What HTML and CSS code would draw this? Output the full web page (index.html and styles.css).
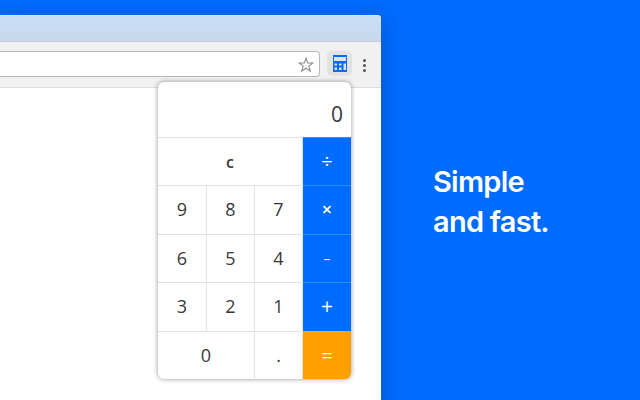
FILE: index.html
```html
<!DOCTYPE html>
<html lang="en">
<head>
<meta charset="utf-8">
<title>Calculator</title>
<link rel="stylesheet" href="styles.css">
</head>
<body>
<main class="promo">
  <section class="browser">
    <div class="titlebar"></div>
    <div class="toolbar">
      <div class="address">
        <svg class="star" width="16" height="16" viewBox="0 0 16 16"><path d="M8 1.2L9.7 6H14.8L10.8 9.1L12.3 14.2L8 11.2L3.7 14.2L5.2 9.1L1.2 6H6.3Z" fill="#fff" stroke="#8b8b8b" stroke-width="1.1"/></svg>
      </div>
      <div class="extension">
        <svg width="14" height="17" viewBox="0 0 14 17"><path fill="#006cff" d="M0 0H14V17H0Z"/><path fill="#e2e2e2" d="M1 2H13V6H1ZM1.5 8.5H4V10.5H1.5ZM6 8.5H8.5V10.5H6ZM1.5 12.5H4V15H1.5ZM6 12.5H8.5V15H6ZM10.5 8.5H13V15H10.5Z"/></svg>
      </div>
      <div class="menu"><i></i><i></i><i></i></div>
    </div>
    <div class="calculator">
      <div class="display">0</div>
      <div class="key clear">c</div><div class="key op">÷</div>
      <div class="key">9</div><div class="key">8</div><div class="key">7</div><div class="key op times">×</div>
      <div class="key">6</div><div class="key">5</div><div class="key">4</div><div class="key op minus">-</div>
      <div class="key">3</div><div class="key">2</div><div class="key">1</div><div class="key op plus">+</div>
      <div class="key zero">0</div><div class="key">.</div><div class="key op equals">=</div>
    </div>
  </section>
  <h1 class="headline">Simple<br>and fast.</h1>
</main>
</body>
</html>
```
FILE: styles.css
```css
* { box-sizing: border-box; }
body { margin: 0; }
.promo {
  display: flex;
  width: 640px;
  height: 400px;
  padding-top: 15px;
  overflow: hidden;
  background: #006cff;
}
.browser {
  position: relative;
  flex: none;
  width: 381px;
  height: 400px;
  background: #fff;
  border-radius: 0 4px 0 0;
  box-shadow: 0 4px 22px rgba(0, 20, 70, .3);
}
.titlebar {
  height: 27px;
  background: linear-gradient(#c7dff6, #c7d8ec);
  border-top: 1px solid #d5e8fa;
  border-bottom: 1px solid #c5ced8;
  border-radius: 0 4px 0 0;
}
.toolbar {
  display: flex;
  align-items: flex-start;
  height: 46px;
  padding-top: 9px;
  background: #f1f1f1;
  border-bottom: 1px solid #dcdcdc;
}
.address {
  display: flex;
  justify-content: flex-end;
  width: 320px;
  height: 26px;
  padding: 5px 5px 0 0;
  background: #fff;
  border: 1px solid #b8b8b8;
  border-left: 0;
  border-radius: 0 4px 4px 0;
}
.extension {
  display: flex;
  align-items: center;
  justify-content: center;
  width: 25px;
  height: 25px;
  margin-left: 7px;
  background: #e2e2e2;
  border-radius: 5px;
}
.menu {
  display: flex;
  flex-direction: column;
  gap: 2px;
  margin: 8px 0 0 11px;
}
.menu i {
  width: 3px;
  height: 3px;
  background: #555;
  border-radius: 50%;
}
.calculator {
  position: absolute;
  top: 67px;
  left: 158px;
  display: grid;
  grid-template-columns: 49px 48px 48px 48px;
  grid-template-rows: 55px 48px 49px 48px 49px 48px;
  width: 193px;
  height: 297px;
  overflow: hidden;
  background: #fff;
  border-radius: 6px;
  box-shadow: 0 0 5px rgba(0, 0, 0, .42);
  color: #383838;
  font: 400 18px/1 "Open Sans", "Noto Sans", sans-serif;
}
.display {
  grid-column: 1 / -1;
  padding: 22px 8px 0 0;
  font-size: 21px;
  text-align: right;
}
.key {
  display: flex;
  align-items: center;
  justify-content: center;
  padding-bottom: 2px;
  border-top: 1px solid #e2e2e2;
  border-right: 1px solid #e2e2e2;
}
.clear { grid-column: span 3; padding-bottom: 0; font-size: 16px; font-weight: 600; }
.zero { grid-column: span 2; }
.op {
  background: #006cff;
  border-top-color: #2492f0;
  border-right: 0;
  color: #fff;
  font-size: 20px;
}
.times { padding-bottom: 3px; font-size: 18px; font-weight: 600; }
.minus { font-size: 23px; font-weight: 300; }
.plus { font-size: 21px; }
.equals { padding-bottom: 0; background: #ffa000; border-top-color: #efa526; }
.headline {
  margin: 147px 0 0 52px;
  color: #fff;
  font: 600 29px/40px Inter, sans-serif;
  letter-spacing: -.75px;
}
```
